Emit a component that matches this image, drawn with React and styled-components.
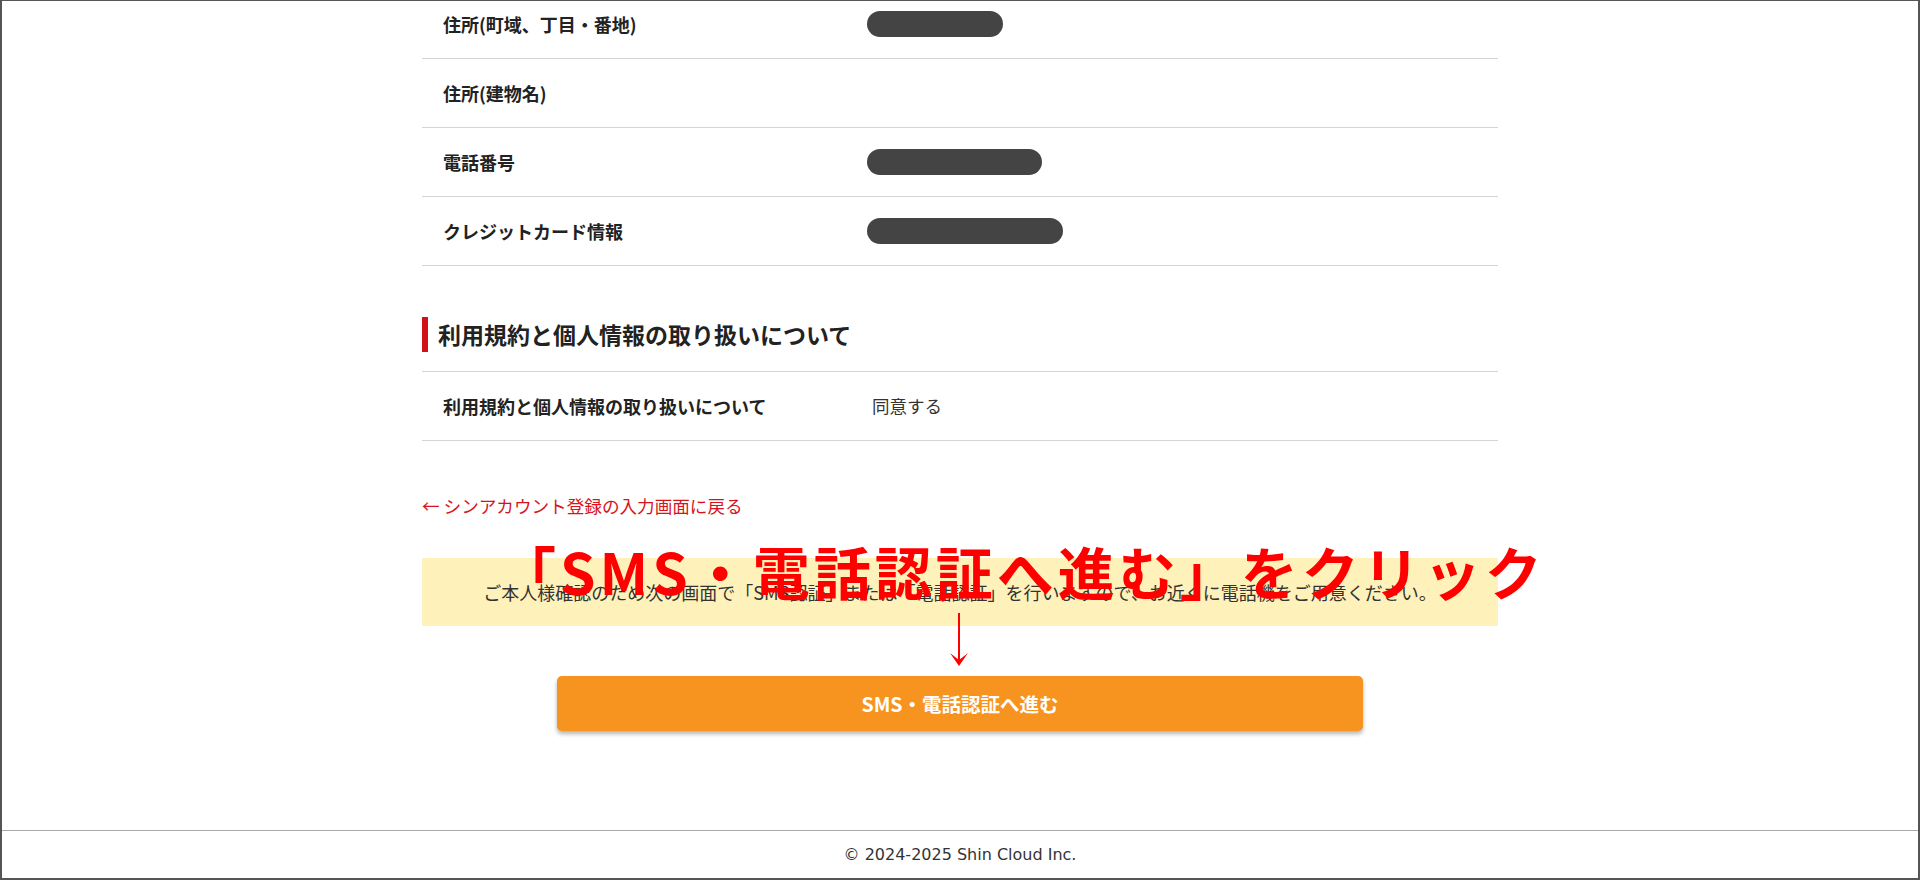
import styled, { createGlobalStyle } from "styled-components";

const GlobalStyle = createGlobalStyle`
  html, body {
    margin: 0;
    padding: 0;
    background: #fff;
  }
  body {
    font-family: "Noto Sans CJK JP", "Noto Sans", sans-serif;
    color: #333;
  }
`;

const Frame = styled.div`
  box-sizing: border-box;
  height: 880px;
  display: flex;
  flex-direction: column;
  border: 2px solid #555;
  border-top-width: 1px;
  overflow: hidden;
`;

const Main = styled.main`
  flex: 1;
  overflow: hidden;
`;

const Content = styled.div`
  width: 1076px;
  margin: 0 auto;
`;

const InfoList = styled.div`
  margin-top: ${(p) => p.$offset || 0}px;
  border-top: ${(p) => (p.$topLine ? "1px solid #d4d4d4" : "none")};
`;

const Row = styled.div`
  box-sizing: border-box;
  height: 69px;
  display: flex;
  align-items: center;
  border-bottom: 1px solid #d4d4d4;
`;

const Label = styled.div`
  box-sizing: border-box;
  width: 445px;
  padding-left: 21px;
  font-size: 18px;
  font-weight: 700;
  color: #222;
  line-height: 24px;
`;

const Value = styled.div`
  flex: 1;
  font-size: 17.5px;
  color: #333;
  line-height: 24px;
  padding-left: 5px;
`;

const Masked = styled.span`
  display: block;
  width: ${(p) => p.$w}px;
  height: 26px;
  margin-left: -5px;
  border-radius: 13px;
  background: #444;
`;

const SectionTitle = styled.h2`
  box-sizing: border-box;
  margin: 51px 0 19px;
  height: 35px;
  display: flex;
  align-items: center;
  border-left: 6px solid #d0101b;
  padding-left: 10px;
  font-size: 23px;
  font-weight: 700;
  color: #222;
  line-height: 1;
`;

const BackLink = styled.a`
  display: block;
  margin-top: 53px;
  font-size: 17.6px;
  line-height: 24px;
  color: #d8131b;
  text-decoration: none;
  cursor: pointer;
`;

const ConfirmArea = styled.div`
  position: relative;
  margin-top: 40px;
  display: flex;
  flex-direction: column;
  align-items: center;
`;

const Notice = styled.div`
  box-sizing: border-box;
  width: 100%;
  height: 68px;
  display: flex;
  align-items: center;
  justify-content: center;
  background: #fff1ba;
  border-radius: 2px;
  font-size: 18px;
  color: #333;
`;

const SubmitButton = styled.button`
  margin-top: 50px;
  width: 806px;
  height: 55px;
  border: none;
  border-radius: 5px;
  background: #f7941f;
  box-shadow: 0 3px 4px rgba(0, 0, 0, 0.3);
  color: #fff;
  font-family: "Noto Sans CJK JP", sans-serif;
  font-size: 19.5px;
  font-weight: 700;
  cursor: pointer;
`;

const Callout = styled.div`
  position: absolute;
  top: -16px;
  left: 77px;
  white-space: nowrap;
  pointer-events: none;
  font-family: "Noto Sans CJK JP", sans-serif;
  font-size: 57px;
  font-weight: 700;
  line-height: 1;
  letter-spacing: 4px;
  color: #ff0000;
`;

const CalloutArrow = styled.svg`
  position: absolute;
  top: 55px;
  left: 527px;
  pointer-events: none;
`;

const Footer = styled.footer`
  box-sizing: border-box;
  height: 48px;
  border-top: 1px solid #aaa;
  display: flex;
  align-items: center;
  justify-content: center;
  font-family: "DejaVu Sans", Verdana, sans-serif;
  font-size: 16px;
  color: #333;
`;

export default function App() {
  return (
    <>
      <GlobalStyle />
      <Frame>
        <Main>
          <Content>
            <InfoList $offset={-11}>
              <Row>
                <Label>住所(町域、丁目・番地)</Label>
                <Value><Masked $w={136} /></Value>
              </Row>
              <Row>
                <Label>住所(建物名)</Label>
                <Value />
              </Row>
              <Row>
                <Label>電話番号</Label>
                <Value><Masked $w={175} /></Value>
              </Row>
              <Row>
                <Label>クレジットカード情報</Label>
                <Value><Masked $w={196} /></Value>
              </Row>
            </InfoList>

            <SectionTitle>利用規約と個人情報の取り扱いについて</SectionTitle>
            <InfoList $topLine>
              <Row>
                <Label>利用規約と個人情報の取り扱いについて</Label>
                <Value>同意する</Value>
              </Row>
            </InfoList>

            <BackLink>← シンアカウント登録の入力画面に戻る</BackLink>

            <ConfirmArea>
              <Notice>
                ご本人様確認のため次の画面で「SMS認証」または「電話認証」を行いますので、お近くに電話機をご用意ください。
              </Notice>
              <SubmitButton type="button">SMS・電話認証へ進む</SubmitButton>
              <Callout>「SMS・電話認証へ進む」をクリック</Callout>
              <CalloutArrow width="20" height="54" viewBox="0 0 20 54">
                <line x1="10" y1="0" x2="10" y2="50" stroke="#ff0000" strokeWidth="2" />
                <path d="M1 40 L10 53 L19 40 L10 47 Z" fill="#ff0000" />
              </CalloutArrow>
            </ConfirmArea>
          </Content>
        </Main>
        <Footer>© 2024-2025 Shin Cloud Inc.</Footer>
      </Frame>
    </>
  );
}
